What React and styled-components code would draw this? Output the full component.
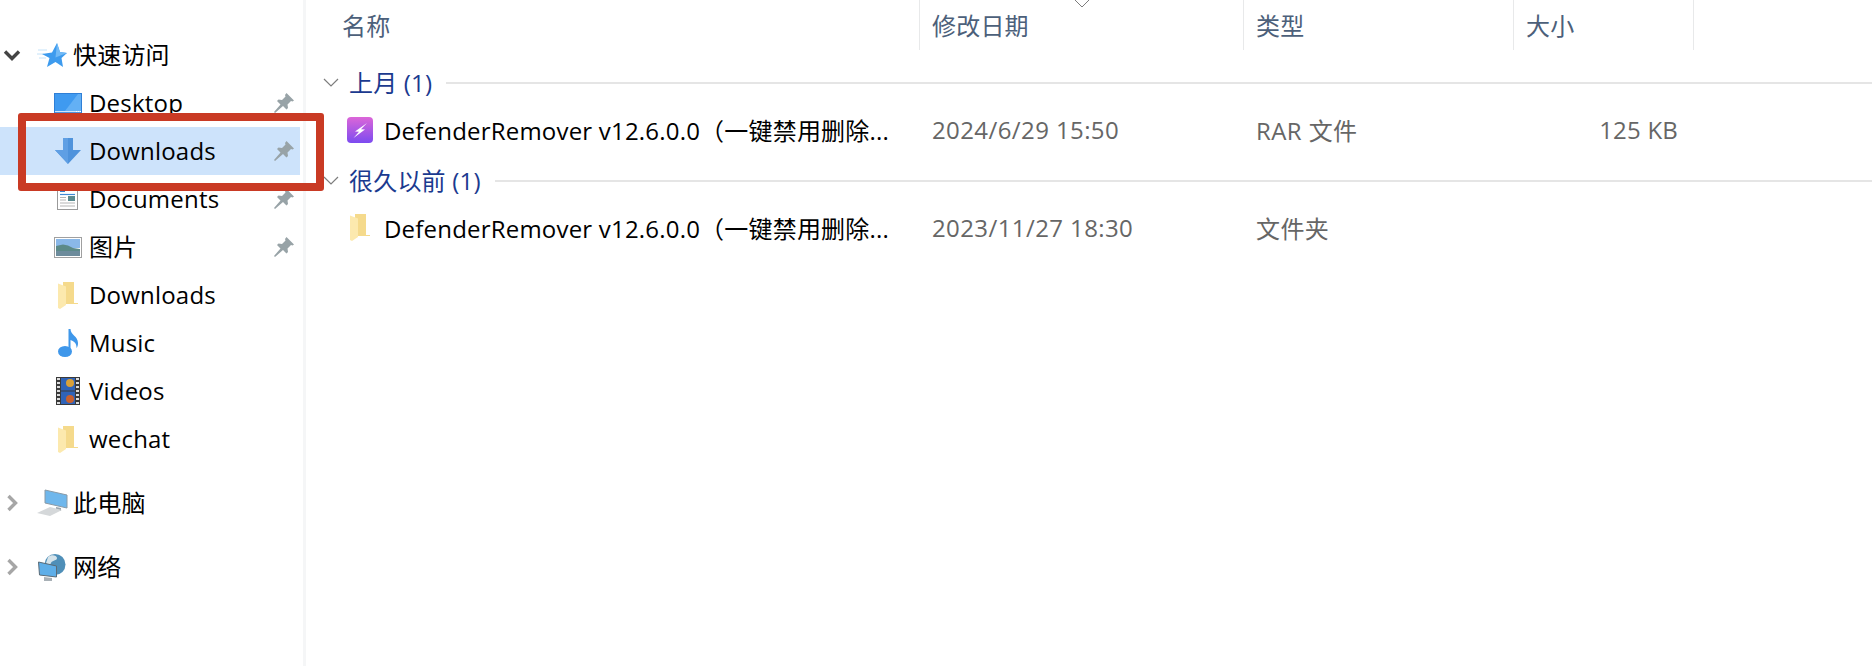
import React from 'react'
import styled, {createGlobalStyle} from 'styled-components'

const GlobalStyle = createGlobalStyle`
  html, body {
    margin: 0;
    height: 100%;
    background: #fff;
  }
  body {
    font-family: 'Open Sans', 'Noto Sans CJK SC', sans-serif;
    font-size: 24px;
    letter-spacing: 0.2px;
    color: #000;
  }
`

const columns = '590px 324px 270px 180px'

const Window = styled.div`
  position: relative;
  display: flex;
  width: 1872px;
  height: 666px;
  overflow: hidden;
`

const Sidebar = styled.nav`
  width: 303px;
  flex: none;
  border-right: 3px solid #f5f6f7;
  padding-top: 31px;
`

const NavRow = styled.div`
  display: flex;
  align-items: center;
  width: 300px;
  height: 48px;
  padding-left: ${({$top}) => $top ? 0 : 54}px;
  margin-top: ${({$gap}) => $gap ? 16 : 0}px;
  box-sizing: border-box;
  background: ${({$active}) => $active ? '#cde3fb' : 'transparent'};
`

const Caret = styled.span`
  width: 24px;
  flex: none;
  display: flex;
  justify-content: center;
`

const TopIcon = styled.span`
  width: 32px;
  margin-left: 12px;
  margin-right: 5px;
  flex: none;
  display: flex;
  justify-content: center;
`

const ChildIcon = styled.span`
  width: 28px;
  margin-right: 7px;
  flex: none;
  display: flex;
  justify-content: center;
`

const NavLabel = styled.span`
  line-height: 48px;
  white-space: nowrap;
`

const PinSlot = styled.span`
  margin-left: auto;
  margin-right: 6px;
  display: flex;
`

const Highlight = styled.div`
  position: absolute;
  left: 18px;
  top: 113px;
  width: 306px;
  height: 78px;
  box-sizing: border-box;
  border: 8px solid #c93a24;
  border-radius: 3px;
`

const Main = styled.main`
  flex: 1;
  min-width: 0;
`

const Header = styled.div`
  display: grid;
  grid-template-columns: ${columns};
  height: 50px;
  padding-left: 24px;
`

const HeaderCell = styled.div`
  position: relative;
  display: flex;
  align-items: center;
  padding: 0 0 2px 12px;
  border-right: 1px solid #e8e9ea;
  color: #4c607a;
  white-space: nowrap;
`

const SortMark = styled.svg`
  position: absolute;
  left: 154px;
  top: 0;
`

const Groups = styled.div`
  padding-top: 9px;
`

const GroupHead = styled.div`
  display: flex;
  align-items: center;
  height: 48px;
  padding-left: 17px;
  margin-top: ${({$gap}) => $gap ? 2 : 0}px;
  color: #1b3a8f;
`

const GroupLabel = styled.span`
  margin: 0 14px 3px 10px;
  white-space: nowrap;
`

const GroupLine = styled.span`
  flex: 1;
  height: 2px;
  background: #e5e5e5;
`

const FileRow = styled.div`
  display: grid;
  grid-template-columns: ${columns};
  align-items: center;
  height: 48px;
  box-sizing: border-box;
  padding: 0 0 3px 24px;
  color: #666;
  white-space: nowrap;
`

const NameCell = styled.div`
  display: flex;
  align-items: center;
  color: #000;
`

const FileIcon = styled.span`
  width: 26px;
  margin-left: 17px;
  margin-right: 11px;
  display: flex;
  justify-content: center;
  flex: none;
`

const PlainCell = styled.div`
  padding-left: 12px;
  letter-spacing: 0.4px;
`

const SizeCell = styled.div`
  text-align: right;
  padding-right: 16px;
`

const ChevronDown = () =>
  <svg width="18" height="13" viewBox="0 0 18 13">
    <path d="M2 2.500l7 7 7-7" fill="none" stroke="#444" strokeWidth="3.400"/>
  </svg>

const ChevronRight = () =>
  <svg width="13" height="18" viewBox="0 0 13 18">
    <path d="M2.500 2l7 7-7 7" fill="none" stroke="#a6a6a6" strokeWidth="3.400"/>
  </svg>

const GroupChevron = () =>
  <svg width="16" height="10" viewBox="0 0 16 10">
    <path d="M1 1l7 7 7-7" fill="none" stroke="#7d7d7d" strokeWidth="1.200"/>
  </svg>

const Pin = () =>
  <svg width="20" height="20" viewBox="0 0 20 20">
    <path d="M12.500 0L20 7.500l-1.500 1-1.500-.5-3.500 3.500.5 3.500-1.500 1.500-3.500-3.500L1 20 0 19l6.500-7.500L3 8l1.500-1.500 3.500.5L11.500 3.500 11 2z" fill="#98a3a7"/>
  </svg>

const Star = () =>
  <svg width="30" height="24" viewBox="0 0 30 24">
    <path d="M1 7h9M0 11h7M2 15h7" stroke="#c4e2f8" strokeWidth="1"/>
    <path d="M20 0l3 9 7 1-5.500 5 1.500 9-7.500-5-8.500 5 2.500-9L5 11l10-1.500z" fill="#3d9bee"/>
    <path d="M20 0l3 9 7 1-11.500 4.500z" fill="#72baf6"/>
  </svg>

const DesktopIcon = () =>
  <svg width="28" height="20" viewBox="0 0 28 20">
    <rect width="28" height="20" fill="#2f7fd6"/>
    <rect x="1" y="1" width="26" height="17" fill="#3f9af0"/>
    <path d="M11 18L24 1h3v17z" fill="#63b0f5"/>
    <rect x="1" y="18" width="26" height="1.200" fill="#cfe6fb"/>
    <path d="M22 18.500h1M24 18.500h1M26 18.500h1" stroke="#fff"/>
  </svg>

const ArrowDown = () =>
  <svg width="26" height="26" viewBox="0 0 26 26">
    <path d="M8 0h10v12h8L13 26 0 12h8z" fill="#4f93dc"/>
    <path d="M8 0h5v26L0 12h8z" fill="#5f9fe4"/>
  </svg>

const DocumentIcon = () =>
  <svg width="22" height="22" viewBox="0 0 22 22">
    <rect x="0.500" y="0.500" width="20" height="21" fill="#fff" stroke="#9a9a9a"/>
    <path d="M3 3h5" stroke="#3b82c9" strokeWidth="2"/>
    <path d="M3 6.500h15" stroke="#3f8ad6" strokeWidth="1.200"/>
    <rect x="11" y="8" width="7" height="5" fill="#5a8a8f"/>
    <path d="M3 9.500h6M3 12h6M3 15h15M3 18h15" stroke="#b5b5b5"/>
  </svg>

const PictureIcon = () =>
  <svg width="28" height="21" viewBox="0 0 28 21">
    <rect x="0.500" y="0.500" width="27" height="20" fill="#fff" stroke="#a0a0a0"/>
    <rect x="2" y="2" width="24" height="9" fill="#8ab8e8"/>
    <path d="M2 9l7-1.500 5 1 5 2.500 7 1v6H2z" fill="#5c8a88"/>
    <rect x="2" y="14" width="24" height="5" fill="#6d8c9c"/>
  </svg>

const Folder = () =>
  <svg width="20" height="27" viewBox="0 0 20 27">
    <path d="M5 0h11v21h4v1H5z" fill="#f5da8c"/>
    <path d="M0 1.500l8 3V23l-6 4-2-1z" fill="#fce9ae"/>
  </svg>

const MusicIcon = () =>
  <svg width="20" height="28" viewBox="0 0 20 28">
    <ellipse cx="7" cy="22.500" rx="7" ry="5.500" fill="#3f97ea"/>
    <path d="M10.500 0h2c0 6 7.500 7 7.500 14 0 2.500-.6 4-1.500 5 .3-5-3-7-6-8v11h-2z" fill="#3f97ea"/>
  </svg>

const VideoIcon = () =>
  <svg width="24" height="28" viewBox="0 0 24 28">
    <rect width="24" height="28" fill="#3a3a3a"/>
    <rect x="5" y="1" width="14" height="12.500" fill="#2f63b8"/>
    <rect x="5" y="14.500" width="14" height="12.500" fill="#2f63b8"/>
    <circle cx="14" cy="6" r="4" fill="#d9a13a"/>
    <circle cx="14" cy="22" r="4" fill="#c8602f"/>
    <path d="M1 2h3M1 6h3M1 10h3M1 14h3M1 18h3M1 22h3M1 26h3M20 2h3M20 6h3M20 10h3M20 14h3M20 18h3M20 22h3M20 26h3" stroke="#ddd" strokeWidth="2"/>
  </svg>

const ComputerIcon = () =>
  <svg width="32" height="28" viewBox="0 0 32 28">
    <path d="M9 1l22 5v13L9 14z" fill="#6fb7ec" stroke="#8a9aa6"/>
    <path d="M20 18l5 1v3l-5-1z" fill="#9aa5ad"/>
    <path d="M1 24l13-6 12 3-12 6z" fill="#d5d8da"/>
  </svg>

const NetworkIcon = () =>
  <svg width="28" height="27" viewBox="0 0 28 27">
    <circle cx="17" cy="10.500" r="10.500" fill="#4f8fb8"/>
    <path d="M10 3c3-3 9-2 9 1s-5 2-6 5-4 2-5 0z" fill="#d5e3ea"/>
    <path d="M0.500 8l18 4v11l-17-2z" fill="#5eaee8" stroke="#5a6b77"/>
    <path d="M6 23l8 1v3H6z" fill="#a8b0b6"/>
  </svg>

const ArchiveIcon = () =>
  <svg width="26" height="26" viewBox="0 0 26 26">
    <defs>
      <linearGradient id="archiveFill" x1="0" y1="0" x2="0" y2="1">
        <stop offset="0" stopColor="#dc66d8"/>
        <stop offset="1" stopColor="#7c4bf0"/>
      </linearGradient>
    </defs>
    <rect width="26" height="26" rx="4" fill="url(#archiveFill)"/>
    <path d="M20 6L8 14.500l4 .2L6.500 21 18 12.500l-4-.2z" fill="#fff"/>
  </svg>

const quickAccess = [
  {label: 'Desktop', Icon: DesktopIcon, pinned: true},
  {label: 'Downloads', Icon: ArrowDown, pinned: true, active: true},
  {label: 'Documents', Icon: DocumentIcon, pinned: true},
  {label: '图片', Icon: PictureIcon, pinned: true},
  {label: 'Downloads', Icon: Folder},
  {label: 'Music', Icon: MusicIcon},
  {label: 'Videos', Icon: VideoIcon},
  {label: 'wechat', Icon: Folder}
]

const fileName = 'DefenderRemover v12.6.0.0（一键禁用删除...'

const groups = [
  {title: '上月 (1)', Icon: ArchiveIcon, date: '2024/6/29 15:50', type: 'RAR 文件', size: '125 KB'},
  {title: '很久以前 (1)', Icon: Folder, date: '2023/11/27 18:30', type: '文件夹', size: ''}
]

const App = () =>
  <Window>
    <GlobalStyle/>
    <Sidebar>
      <NavRow $top>
        <Caret><ChevronDown/></Caret>
        <TopIcon><Star/></TopIcon>
        <NavLabel>快速访问</NavLabel>
      </NavRow>
      {quickAccess.map(({label, Icon, pinned, active}, i) =>
        <NavRow key={i} $active={active}>
          <ChildIcon><Icon/></ChildIcon>
          <NavLabel>{label}</NavLabel>
          {pinned && <PinSlot><Pin/></PinSlot>}
        </NavRow>
      )}
      <NavRow $top $gap>
        <Caret><ChevronRight/></Caret>
        <TopIcon><ComputerIcon/></TopIcon>
        <NavLabel>此电脑</NavLabel>
      </NavRow>
      <NavRow $top $gap>
        <Caret><ChevronRight/></Caret>
        <TopIcon><NetworkIcon/></TopIcon>
        <NavLabel>网络</NavLabel>
      </NavRow>
    </Sidebar>
    <Main>
      <Header>
        <HeaderCell>名称</HeaderCell>
        <HeaderCell>
          <SortMark width="16" height="8" viewBox="0 0 16 8">
            <path d="M1 0l7 7 7-7" fill="none" stroke="#7d7d7d" strokeWidth="1"/>
          </SortMark>
          修改日期
        </HeaderCell>
        <HeaderCell>类型</HeaderCell>
        <HeaderCell>大小</HeaderCell>
      </Header>
      <Groups>
        {groups.map(({title, Icon, date, type, size}, i) =>
          <React.Fragment key={title}>
            <GroupHead $gap={i > 0}>
              <GroupChevron/>
              <GroupLabel>{title}</GroupLabel>
              <GroupLine/>
            </GroupHead>
            <FileRow>
              <NameCell>
                <FileIcon><Icon/></FileIcon>
                {fileName}
              </NameCell>
              <PlainCell>{date}</PlainCell>
              <PlainCell>{type}</PlainCell>
              <SizeCell>{size}</SizeCell>
            </FileRow>
          </React.Fragment>
        )}
      </Groups>
    </Main>
    <Highlight/>
  </Window>

export default App
